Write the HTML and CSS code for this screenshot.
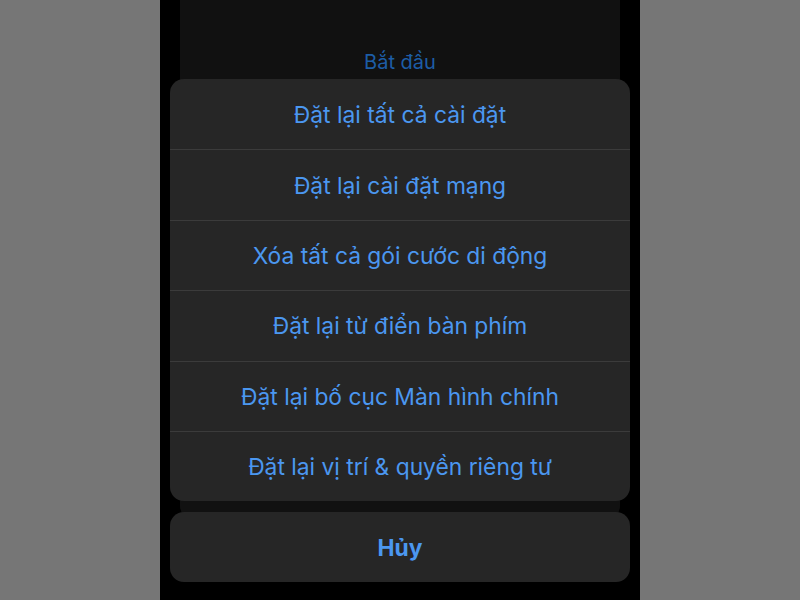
FILE: index.html
```html
<!DOCTYPE html>
<html lang="vi">
<head>
<meta charset="utf-8">
<link rel="stylesheet" href="styles.css">
</head>
<body>
<div class="phone">
  <div class="card">
    <div class="start">Bắt đầu</div>
  </div>
  <div class="sheet-wrap">
    <div class="sheet">
      <div class="row">Đặt lại tất cả cài đặt</div>
      <div class="row">Đặt lại cài đặt mạng</div>
      <div class="row">Xóa tất cả gói cước di động</div>
      <div class="row">Đặt lại từ điển bàn phím</div>
      <div class="row">Đặt lại bố cục Màn hình chính</div>
      <div class="row">Đặt lại vị trí &amp; quyền riêng tư</div>
    </div>
    <div class="cancel">Hủy</div>
  </div>
</div>
</body>
</html>
```
FILE: styles.css
```css
html, body {
  margin: 0;
  padding: 0;
}
body {
  background: #767676;
  width: 800px;
  height: 600px;
  display: flex;
  justify-content: center;
  font-family: Inter, "Noto Sans", sans-serif;
}
.phone {
  width: 480px;
  height: 600px;
  background: #000;
  position: relative;
  overflow: hidden;
}
.card {
  margin: 0 20px;
  height: 520px;
  background: #111111;
  border-radius: 0 0 14px 14px;
  display: flex;
  flex-direction: column;
  align-items: center;
}
.start {
  margin-top: 50px;
  font-size: 20px;
  line-height: 24px;
  color: #1d5da6;
}
.sheet-wrap {
  position: absolute;
  left: 10px;
  right: 10px;
  top: 79px;
  display: flex;
  flex-direction: column;
  gap: 11px;
}
.sheet {
  background: #262626;
  border-radius: 14px;
  overflow: hidden;
}
.row {
  height: 70.4px;
  display: flex;
  align-items: center;
  justify-content: center;
  color: #4b97f0;
  font-size: 22.8px;
  border-top: 1px solid #3b3b3b;
  box-sizing: border-box;
}
.row:first-child {
  border-top: none;
}
.cancel {
  height: 70px;
  background: #262626;
  border-radius: 14px;
  display: flex;
  align-items: center;
  justify-content: center;
  color: #4b97f0;
  font-size: 22.8px;
  font-weight: 700;
}
```
